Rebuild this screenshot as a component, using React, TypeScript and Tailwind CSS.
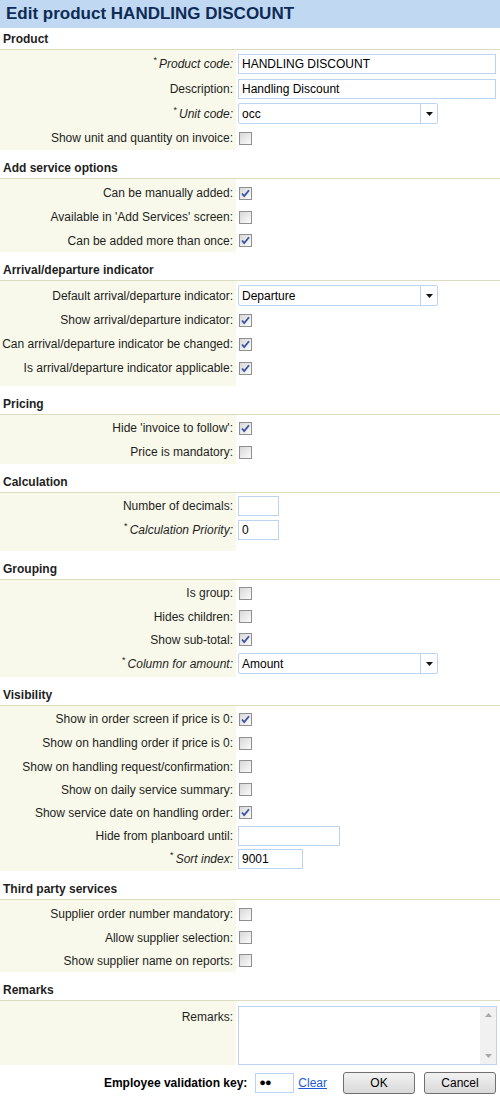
import React from 'react'

type Row =
  | { kind: 'check'; label: string; h: string; checked?: boolean; req?: boolean }
  | { kind: 'text'; label: string; h: string; value?: string; w: string; req?: boolean }
  | { kind: 'select'; label: string; h: string; value: string; req?: boolean }
  | { kind: 'area'; label: string; h: string }

interface Section {
  title: string
  pad: string
  rows: Row[]
}

// row heights tuned against the screenshot
const sections: Section[] = [
  {
    title: 'Product',
    pad: 'pt-0 pb-0',
    rows: [
      { kind: 'text', label: 'Product code:', value: 'HANDLING DISCOUNT', w: 'w-[258px]', req: true, h: 'h-[27px]' },
      { kind: 'text', label: 'Description:', value: 'Handling Discount', w: 'w-[258px]', h: 'h-[24px]' },
      { kind: 'select', label: 'Unit code:', value: 'occ', req: true, h: 'h-[25px]' },
      { kind: 'check', label: 'Show unit and quantity on invoice:', h: 'h-[24px]' },
    ],
  },
  {
    title: 'Add service options',
    pad: 'pt-[2px] pb-0',
    rows: [
      { kind: 'check', label: 'Can be manually added:', checked: true, h: 'h-[24px]' },
      { kind: 'check', label: "Available in 'Add Services' screen:", h: 'h-[24px]' },
      { kind: 'check', label: 'Can be added more than once:', checked: true, h: 'h-[23px]' },
    ],
  },
  {
    title: 'Arrival/departure indicator',
    pad: 'pt-[2px] pb-[6px]',
    rows: [
      { kind: 'select', label: 'Default arrival/departure indicator:', value: 'Departure', h: 'h-[25px]' },
      { kind: 'check', label: 'Show arrival/departure indicator:', checked: true, h: 'h-[24px]' },
      { kind: 'check', label: 'Can arrival/departure indicator be changed:', checked: true, h: 'h-[24px]' },
      { kind: 'check', label: 'Is arrival/departure indicator applicable:', checked: true, h: 'h-[24px]' },
    ],
  },
  {
    title: 'Pricing',
    pad: 'pt-[1px] pb-0',
    rows: [
      { kind: 'check', label: "Hide 'invoice to follow':", checked: true, h: 'h-[24px]' },
      { kind: 'check', label: 'Price is mandatory:', h: 'h-[24px]' },
    ],
  },
  {
    title: 'Calculation',
    pad: 'pt-[1px] pb-[10px]',
    rows: [
      { kind: 'text', label: 'Number of decimals:', w: 'w-[41px]', h: 'h-[24px]' },
      { kind: 'text', label: 'Calculation Priority:', value: '0', w: 'w-[41px]', req: true, h: 'h-[23px]' },
    ],
  },
  {
    title: 'Grouping',
    pad: 'pt-[1px] pb-[1px]',
    rows: [
      { kind: 'check', label: 'Is group:', h: 'h-[24px]' },
      { kind: 'check', label: 'Hides children:', h: 'h-[23px]' },
      { kind: 'check', label: 'Show sub-total:', checked: true, h: 'h-[23px]' },
      { kind: 'select', label: 'Column for amount:', value: 'Amount', req: true, h: 'h-[25px]' },
    ],
  },
  {
    title: 'Visibility',
    pad: 'pt-[1px] pb-[1px]',
    rows: [
      { kind: 'check', label: 'Show in order screen if price is 0:', checked: true, h: 'h-[24px]' },
      { kind: 'check', label: 'Show on handling order if price is 0:', h: 'h-[24px]' },
      { kind: 'check', label: 'Show on handling request/confirmation:', h: 'h-[23px]' },
      { kind: 'check', label: 'Show on daily service summary:', h: 'h-[23px]' },
      { kind: 'check', label: 'Show service date on handling order:', checked: true, h: 'h-[23px]' },
      { kind: 'text', label: 'Hide from planboard until:', w: 'w-[102px]', h: 'h-[23px]' },
      { kind: 'text', label: 'Sort index:', value: '9001', w: 'w-[65px]', req: true, h: 'h-[23px]' },
    ],
  },
  {
    title: 'Third party services',
    pad: 'pt-[2px] pb-0',
    rows: [
      { kind: 'check', label: 'Supplier order number mandatory:', h: 'h-[24px]' },
      { kind: 'check', label: 'Allow supplier selection:', h: 'h-[23px]' },
      { kind: 'check', label: 'Show supplier name on reports:', h: 'h-[23px]' },
    ],
  },
  {
    title: 'Remarks',
    pad: 'pt-0 pb-0',
    rows: [{ kind: 'area', label: 'Remarks:', h: 'h-[64px]' }],
  },
]

function Checkbox({ checked }: { checked?: boolean }) {
  return (
    <span className="ml-[3px] flex h-[13px] w-[13px] items-center justify-center border border-[#8e8f8f] bg-gradient-to-br from-[#d8d8d8] to-[#fbfbfb]">
      {checked && (
        <svg width="9" height="9" viewBox="0 0 9 9">
          <path d="M1 4.5 L3.2 7 L8 1.2" fill="none" stroke="#3654a5" strokeWidth="1.8" />
        </svg>
      )}
    </span>
  )
}

function Label({ text, req, top }: { text: string; req?: boolean; top?: boolean }) {
  return (
    <div
      className={`flex w-[236px] shrink-0 justify-end self-stretch bg-[#f8f9ea] pr-[3px] text-[12px] text-[#1e1e1e] ${
        top ? 'items-start pt-[7px]' : 'items-center'
      }`}
    >
      {req && <span className="mr-[2px] -mt-[6px] text-[9px]">*</span>}
      <span className={req ? 'italic' : ''}>{text}</span>
    </div>
  )
}

function Control({ row }: { row: Row }) {
  if (row.kind === 'check') return <Checkbox checked={row.checked} />
  if (row.kind === 'text')
    return (
      <div className={`ml-[2px] flex h-[20px] items-center border border-[#bcd3f4] bg-white px-[3px] text-[12px] text-black ${row.w}`}>
        {row.value}
      </div>
    )
  if (row.kind === 'select')
    return (
      <div className="ml-[2px] flex h-[21px] w-[200px] items-center rounded-[2px] border border-[#bcd3f4] bg-white text-[12px] text-black">
        <span className="flex-1 pl-[3px]">{row.value}</span>
        <span className="flex h-full w-[17px] items-center justify-center border-l border-[#bcd3f4]">
          <svg width="7" height="4" viewBox="0 0 7 4">
            <path d="M0 0 H7 L3.5 4 Z" fill="#111" />
          </svg>
        </span>
      </div>
    )
  return (
    <div className="ml-[2px] mt-[5px] flex h-[59px] w-[259px] border border-[#bcd3f4] bg-white">
      <div className="flex-1" />
      <div className="flex w-[16px] flex-col items-center justify-between bg-[#f1f1f1] py-[6px]">
        <svg width="7" height="4" viewBox="0 0 7 4">
          <path d="M0 4 H7 L3.5 0 Z" fill="#a8a8a8" />
        </svg>
        <svg width="7" height="4" viewBox="0 0 7 4">
          <path d="M0 0 H7 L3.5 4 Z" fill="#a8a8a8" />
        </svg>
      </div>
    </div>
  )
}

export default function App() {
  return (
    <div className="flex h-[1100px] w-[500px] flex-col bg-white" style={{ fontFamily: '"Liberation Sans", Arial, sans-serif' }}>
      <div className="flex h-[28px] shrink-0 items-center bg-[#c0d8f1] pl-[6px] text-[17px] font-bold text-[#0e2b56]">
        Edit product HANDLING DISCOUNT
      </div>
      {sections.map((s, i) => (
        <div key={s.title} className={i === 0 ? 'mt-[1px]' : 'mt-[8px]'}>
          <div className="flex h-[21px] items-center border-b border-[#dcdcc0] pl-[3px] text-[12px] font-bold text-[#1e1e1e]">
            {s.title}
          </div>
          <div className={`flex flex-col bg-[linear-gradient(to_right,#f8f9ea_236px,#fff_236px)] ${s.pad}`}>
            {s.rows.map((r) => (
              <div key={r.label} className={`flex ${r.h}`}>
                <Label text={r.label} req={r.req} top={r.kind === 'area'} />
                <div className={r.kind === 'area' ? 'flex items-start' : 'flex items-center'}>
                  <Control row={r} />
                </div>
              </div>
            ))}
          </div>
        </div>
      ))}
      <div className="flex h-[36px] items-center justify-end pr-[4px] text-[12px]">
        <span className="font-bold text-black">Employee validation key:</span>
        <div className="ml-[8px] flex h-[20px] w-[39px] items-center border border-[#bcd3f4] pl-[3px] text-[11px] tracking-[-1px] text-black">
          ●●
        </div>
        <a className="ml-[4px] text-[#1b5bd6] underline">Clear</a>
        <button className="ml-[16px] h-[22px] w-[72px] rounded-[3px] border border-[#707070] bg-gradient-to-b from-[#f2f2f2] to-[#d9d9d9] text-[12px] text-black">
          OK
        </button>
        <button className="ml-[9px] h-[22px] w-[72px] rounded-[3px] border border-[#707070] bg-gradient-to-b from-[#f2f2f2] to-[#d9d9d9] text-[12px] text-black">
          Cancel
        </button>
      </div>
    </div>
  )
}
